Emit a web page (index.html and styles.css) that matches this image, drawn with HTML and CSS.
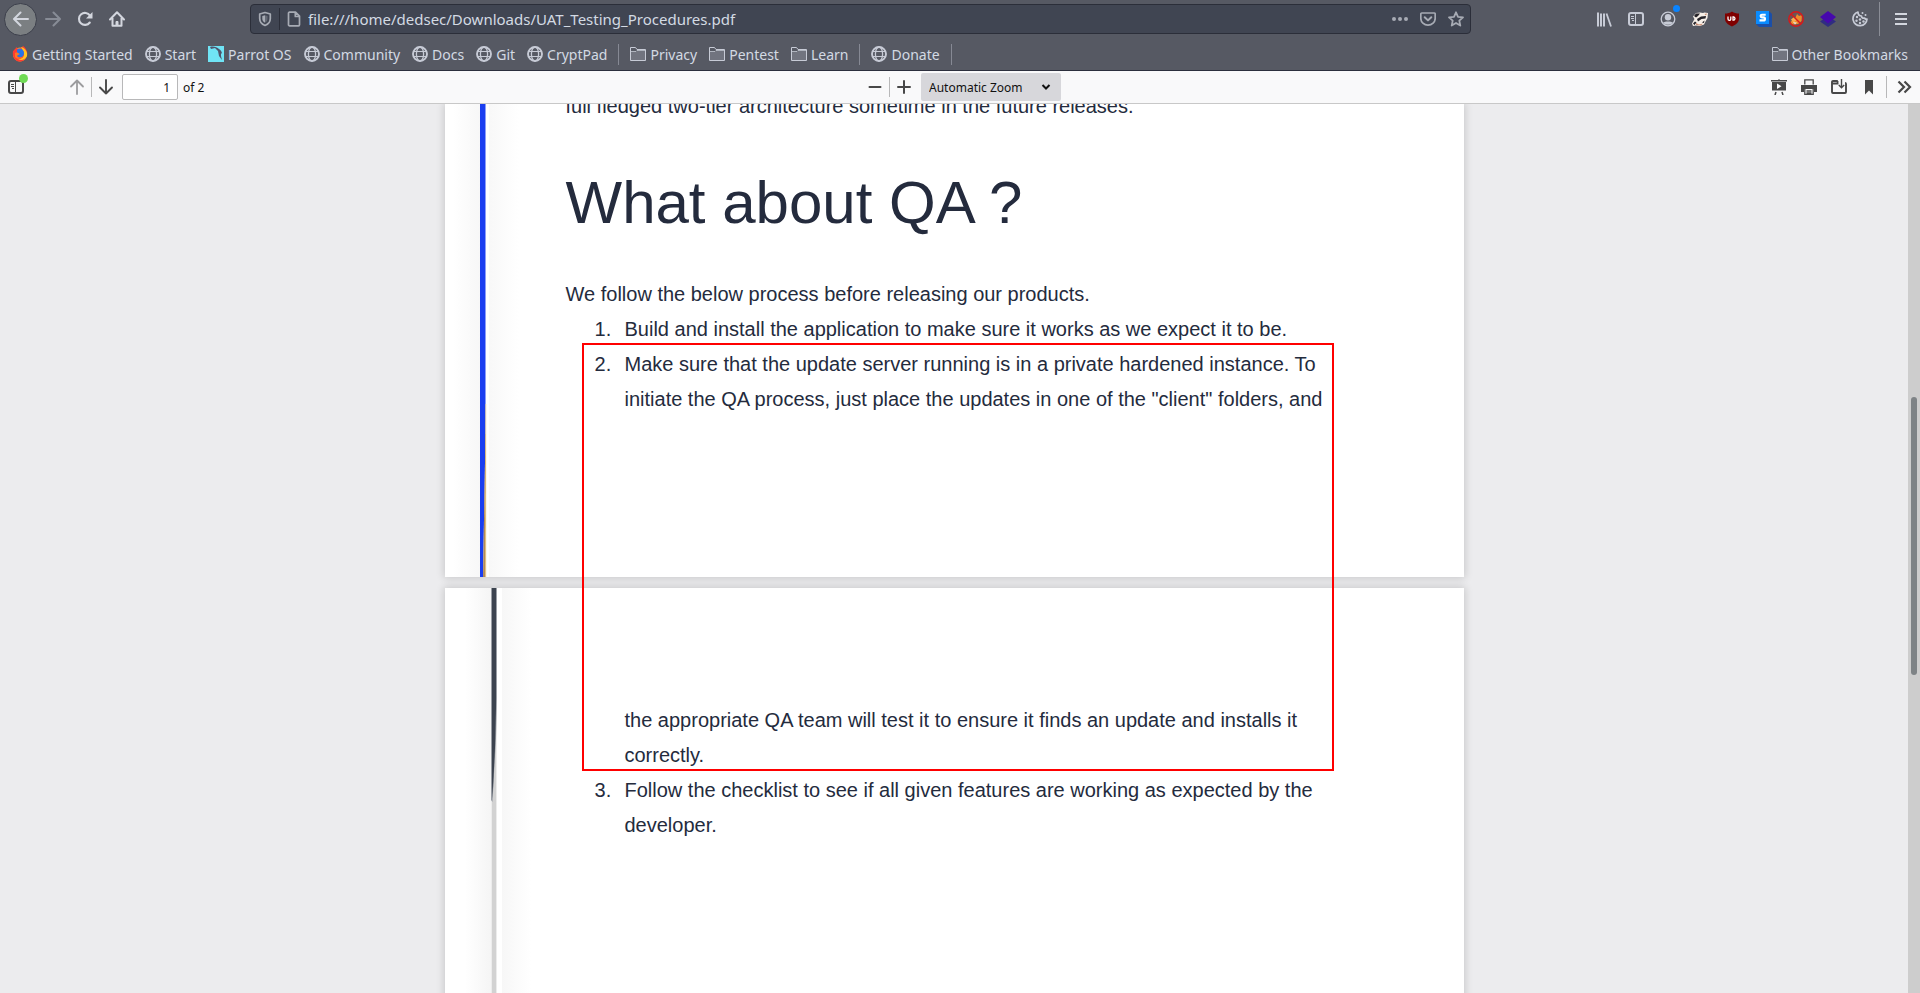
FILE: index.html
```html
<!DOCTYPE html>
<html lang="en">
<head>
<meta charset="utf-8">
<title>UAT_Testing_Procedures.pdf</title>
<link rel="stylesheet" href="styles.css">
</head>
<body>
<svg class="defs" aria-hidden="true">
  <symbol id="globe" viewBox="0 0 16 16"><g fill="none" stroke="#c7cbd6" stroke-width="1.3"><circle cx="8" cy="8" r="7" stroke-width="1.9"/><ellipse cx="8" cy="8" rx="3.6" ry="7"/><path d="M2 5.500h12M2 10.500h12" stroke-width="1.200"/></g></symbol>
  <symbol id="folder" viewBox="0 0 16 16"><path d="M.5 14.500v-13h5l1.500 2h8.500v11z" fill="#565963" stroke="#c7cbd6"/><path d="M1 6h5l1-1h8v9H1z" fill="#71747f"/><path d="M1 5.500h5l1-1h8" fill="none" stroke="#c7cbd6" stroke-width=".8"/></symbol>
  <symbol id="sidebar" viewBox="0 0 16 16"><rect x="1" y="2" width="14" height="12" rx="2" fill="none" stroke="currentColor" stroke-width="2"/><path d="M7.500 2v12" stroke="currentColor"/><path d="M3 5.500h3M3 7.500h3M4 9.500h2" stroke="currentColor"/></symbol>
</svg>

<header class="chrome">
  <div class="nav">
    <div class="nav-buttons">
      <button class="icon-btn back" aria-label="Back"><svg viewBox="0 0 16 16"><path d="M15 8H1.500M7.500 1.500L1 8l6.500 6.500" fill="none" stroke="#d3d6de" stroke-width="2" stroke-linecap="round" stroke-linejoin="round"/></svg></button>
      <button class="icon-btn" aria-label="Forward"><svg viewBox="0 0 16 16"><path d="M1 8h13.500M8.500 1.500L15 8l-6.500 6.500" fill="none" stroke="#888c96" stroke-width="2" stroke-linecap="round" stroke-linejoin="round"/></svg></button>
      <button class="icon-btn" aria-label="Reload"><svg viewBox="0 0 16 16"><path d="M12.800 11.500A6 6 0 1 1 13 4.600" fill="none" stroke="#d3d6de" stroke-width="2.100" stroke-linecap="round"/><path d="M15.500 1v6.500H9z" fill="#d3d6de"/></svg></button>
      <button class="icon-btn" aria-label="Home"><svg viewBox="0 0 16 16"><path d="M1 8.500L8 1.300l7 7.200M3.500 7v7.700h9V7" fill="none" stroke="#d3d6de" stroke-width="2" stroke-linecap="round" stroke-linejoin="round"/><path d="M7 14.500v-4h2v4z" fill="#d3d6de" stroke="#d3d6de"/></svg></button>
    </div>
    <div class="urlbar">
      <button class="url-icon shield" aria-label="Tracking protection"><svg viewBox="0 0 16 16"><path d="M8 1.500L13.300 3v4.500C13.300 11 11 13.300 8 14.500 5 13.300 2.700 11 2.700 7.500V3z" fill="none" stroke="#a7abb4" stroke-width="1.700" stroke-linejoin="round"/><path d="M8 4.300L5.300 5v3c0 1.500 1.200 3 2.700 3.800z" fill="#a7abb4"/><path d="M8 4.300l2.500.7v3C10.500 9.500 9.500 11 8 11.800z" fill="#666b76"/></svg></button>
      <button class="url-icon" aria-label="Page information"><svg viewBox="0 0 16 16"><path d="M3.500 1.200h6l4 4v8.600a1 1 0 0 1-1 1h-9a1 1 0 0 1-1-1V2.200a1 1 0 0 1 1-1zM9.300 1.500v4h4" fill="none" stroke="#a7abb4" stroke-width="1.700" stroke-linejoin="round"/></svg></button>
      <input class="url-input" aria-label="Address" value="file:///home/dedsec/Downloads/UAT_Testing_Procedures.pdf">
      <div class="url-actions">
        <button class="url-icon" aria-label="Page actions"><svg viewBox="0 0 16 16"><g fill="#a7abb4"><circle cx="2" cy="8" r="2"/><circle cx="8" cy="8" r="2"/><circle cx="14" cy="8" r="2"/></g></svg></button>
        <button class="url-icon" aria-label="Save to Pocket"><svg viewBox="0 0 16 16"><path d="M1.800 2h12.400a1 1 0 0 1 1 1v4.300a7.100 6.700 0 0 1-14.400 0V3a1 1 0 0 1 1-1z" fill="none" stroke="#a7abb4" stroke-width="1.700"/><path d="M4.700 6.200L8 9.400l3.300-3.200" fill="none" stroke="#a7abb4" stroke-width="2" stroke-linecap="round" stroke-linejoin="round"/></svg></button>
        <button class="url-icon" aria-label="Bookmark this page"><svg viewBox="0 0 16 16"><path d="M8 1.300l2 4.500 5 .5-3.700 3.300 1 5L8 12l-4.300 2.600 1-5L1 6.300l5-.5z" fill="none" stroke="#a7abb4" stroke-width="1.800" stroke-linejoin="round"/></svg></button>
      </div>
    </div>
    <div class="extensions">
      <button class="icon-btn" aria-label="Library"><svg viewBox="0 0 16 16"><path d="M2 1.500v14M5 2.500v13M8 2.500v13" stroke="#c7cbd6" stroke-width="2"/><path d="M10.500 2.500l4.500 13" stroke="#c7cbd6" stroke-width="1.800"/></svg></button>
      <button class="icon-btn light" aria-label="Sidebars"><svg viewBox="0 0 16 16"><use href="#sidebar"/></svg></button>
      <button class="icon-btn account" aria-label="Account"><svg viewBox="0 0 16 16"><circle cx="8" cy="8" r="6.800" fill="none" stroke="#c7cbd6" stroke-width="1.300"/><circle cx="8" cy="6.300" r="3.200" fill="#c7cbd6"/><path d="M3 11.500c2-1.500 8-1.500 10 0-2 3-8 3-10 0z" fill="#c7cbd6"/></svg><span class="account-dot"></span></button>
      <button class="icon-btn" aria-label="Privacy Badger"><svg viewBox="0 0 16 16"><path d="M0 12.500L2.500 8 1 5.500 4 2l4-.5 3 .5 1.500-.5L16 2l-.5 5-2 3.500-1.500 3L8 15l-4-.5-3 .5z" fill="#f6efe8"/><path d="M2 5l2-2.500h4L6 5 4 6.500zM5 8l4-2.500 5-.5-.5 2.500-4 .5L6 10.500zM1 12.500l2-2 1.500 1L2.500 14zM10 11.500l2.500-2-.5 2.500z" fill="#252329"/><path d="M12.500 3l2.500-.500-1 2zM4 12l3 1.500 4-1-2 2-5-.500z" fill="#c98c72"/></svg></button>
      <button class="icon-btn" aria-label="uBlock Origin"><svg viewBox="0 0 16 16"><path d="M8 .5c2 1.500 4.500 2 7 2v5c0 4-3 6-7 8-4-2-7-4-7-8v-5c2.500 0 5-.5 7-2z" fill="#800000"/><path d="M4 5.500v2.500a1.200 1.200 0 0 0 2.800 0V5.500M9 6h1a1.800 1.800 0 0 1 0 3.200H9z" fill="none" stroke="#fff" stroke-width="1.300"/></svg></button>
      <button class="icon-btn" aria-label="Stylus"><svg viewBox="0 0 16 16"><path d="M13 0l3 3v13H3l-3-3z" fill="#1b4fa8"/><path d="M0 0h13v13H0z" fill="#0a8cff"/><path d="M9.700 3.700H6a1.300 1.300 0 0 0 0 2.700h1.500a1.500 1.500 0 0 1 0 3H3.500" fill="none" stroke="#fff" stroke-width="2.100"/></svg></button>
      <button class="icon-btn" aria-label="FoxyProxy"><svg viewBox="0 0 16 16"><circle cx="8" cy="8" r="7.200" fill="#6b5557"/><path d="M7.500 6.500l1.500-3.500 2 2 3-1-.5 6-3.500 3-6 .5-1.500-2.500z" fill="#f08a2a"/><path d="M3 8.500l3-2.500 3 2.500L5.500 12z" fill="#f9b04f"/><path d="M5 11l4 .5-2 2z" fill="#e6dfd5"/><circle cx="8" cy="8" r="7.200" fill="none" stroke="#d91819" stroke-width="1.400"/><path d="M3 3l10 10" stroke="#d91819" stroke-width="1.400"/></svg></button>
      <button class="icon-btn" aria-label="Wappalyzer"><svg viewBox="0 0 16 16"><path d="M8 5l8 5.500L8 16 0 10.500z" fill="#302d82"/><path d="M8 0l8 6-8 6.500L0 6z" fill="#4608ad"/></svg></button>
      <button class="icon-btn" aria-label="Cookie manager"><svg viewBox="0 0 16 16"><path d="M6 1a7 7 0 1 0 9 7c-1 .5-2 0-2.500-1-2 .5-3-.5-3-2C7 5 6 3 6 1z" fill="none" stroke="#c7cbd6" stroke-width="1.700" stroke-linejoin="round"/><g fill="#c7cbd6"><circle cx="5" cy="6" r="1.200"/><circle cx="4.500" cy="9.700" r="1.200"/><circle cx="8" cy="8.500" r="1.200"/><circle cx="8" cy="12" r="1.200"/><circle cx="11.500" cy="10.500" r="1.200"/><circle cx="10.500" cy="2" r="1"/><circle cx="13.500" cy="4" r="1"/></g></svg></button>
      <span class="menu-sep"></span>
      <button class="icon-btn menu" aria-label="Open menu"><svg viewBox="0 0 16 16"><path d="M2 3h12M2 8h12M2 13h12" stroke="#d3d6de" stroke-width="2"/></svg></button>
    </div>
  </div>

  <nav class="bookmarks" aria-label="Bookmarks">
    <a href="#"><svg viewBox="0 0 16 16"><circle cx="8" cy="8.500" r="7" fill="#ff9a16"/><path d="M1 5c2-1 3-3 3-4l3 3 4-4c3 2 5 6 4 9-1 4-4 7-8 6.500C3 15 0 11 1 5z" fill="#ff3c32"/><path d="M9 1c4 1 7 5 6 9-2 4-6 5-9 3 4 0 6-2 6-5 0-3-2-4-3-7z" fill="#ffc421"/><path d="M5 4c2-3 7-1 7 3s-4 6-7 3z" fill="#2675e9"/><path d="M3 7c2-1 3 0 5 1-1 1-3 1-3 2 1 2 4 2 6 0-1 3-6 4-8 1z" fill="#ff7625"/></svg>Getting Started</a>
    <a href="#"><svg><use href="#globe"/></svg>Start</a>
    <a href="#"><svg viewBox="0 0 16 16"><path d="M0 0h16v16H0z" fill="#70e4f5"/><path d="M2 1c3-1 7 0 9 2 2 1 3 3 3 5l-1-1v3l1 4-3-4-1-5-3-3-4 1z" fill="#50546c"/></svg>Parrot OS</a>
    <a href="#"><svg><use href="#globe"/></svg>Community</a>
    <a href="#"><svg><use href="#globe"/></svg>Docs</a>
    <a href="#"><svg><use href="#globe"/></svg>Git</a>
    <a href="#"><svg><use href="#globe"/></svg>CryptPad</a>
    <span class="sep"></span>
    <a href="#"><svg><use href="#folder"/></svg>Privacy</a>
    <a href="#"><svg><use href="#folder"/></svg>Pentest</a>
    <a href="#"><svg><use href="#folder"/></svg>Learn</a>
    <span class="sep"></span>
    <a href="#"><svg><use href="#globe"/></svg>Donate</a>
    <span class="sep"></span>
    <a href="#" class="other"><svg><use href="#folder"/></svg>Other Bookmarks</a>
  </nav>
</header>

<div class="toolbar">
  <div class="tools tools-left">
    <button class="tool toggle" aria-label="Toggle sidebar"><svg viewBox="0 0 16 16"><use href="#sidebar"/></svg><span class="toggle-dot"></span></button>
    <div class="pager">
      <button class="tool dim" aria-label="Previous page"><svg viewBox="0 0 16 16"><path d="M8 15V1.500M2 7.500l6-6 6 6" fill="none" stroke="currentColor" stroke-width="1.800" stroke-linecap="round" stroke-linejoin="round"/></svg></button>
      <span class="tool-sep"></span>
      <button class="tool" aria-label="Next page"><svg viewBox="0 0 16 16"><path d="M8 1v13.500M2 8.500l6 6 6-6" fill="none" stroke="currentColor" stroke-width="1.900" stroke-linecap="round" stroke-linejoin="round"/></svg></button>
      <input class="page-input" id="page" value="1">
      <label class="page-label" for="page">of 2</label>
    </div>
  </div>
  <div class="tools tools-zoom">
    <button class="tool" aria-label="Zoom out"><svg viewBox="0 0 16 16"><path d="M2.500 8h11" stroke="currentColor" stroke-width="2" stroke-linecap="round"/></svg></button>
    <span class="tool-sep"></span>
    <button class="tool" aria-label="Zoom in"><svg viewBox="0 0 16 16"><path d="M2 8h12M8 2v12" stroke="currentColor" stroke-width="2" stroke-linecap="round"/></svg></button>
    <div class="zoom"><select aria-label="Zoom"><option>Automatic Zoom</option></select><svg viewBox="0 0 10 10"><path d="M1.500 3L5 6.500 8.500 3" fill="none" stroke="#111" stroke-width="2"/></svg></div>
  </div>
  <div class="tools tools-right">
    <button class="tool" aria-label="Presentation mode"><svg viewBox="0 0 16 16"><path d="M0 1h16v1.500H0zM7.500 0h1v1h-1zM1 3h14v8.500H1z" fill="currentColor"/><path d="M6 4.500v5.500l4.500-2.700z" fill="#f9f9fa"/><path d="M5 13l-1 3M11 13l1 3" stroke="currentColor" stroke-width="1.500"/></svg></button>
    <button class="tool" aria-label="Print"><svg viewBox="0 0 16 16"><path d="M0 6h16v7h-3v-3H3v3H0z" fill="currentColor"/><path d="M3.800 5.500V.8h8.400v4.700M3.800 9.800v5.500h8.400V9.800M5.500 12h5M5.500 14h5" fill="none" stroke="currentColor" stroke-width="1.300"/></svg></button>
    <button class="tool" aria-label="Download"><svg viewBox="0 0 16 16"><path d="M7 3.500L6 2H2a1 1 0 0 0-1 1v10a1 1 0 0 0 1 1h12a1 1 0 0 0 1-1V5a1 1 0 0 0-1-1M1 4.500h6.500" fill="none" stroke="currentColor" stroke-width="1.900"/><path d="M10.500 0v8.500M7.800 6l2.700 2.800L13.200 6" fill="none" stroke="currentColor" stroke-width="1.400"/></svg></button>
    <button class="tool" aria-label="Current view"><svg viewBox="0 0 16 16"><path d="M4 1h8v14.500L8 11.500l-4 4z" fill="currentColor"/></svg></button>
    <span class="tool-sep tall"></span>
    <button class="tool" aria-label="Tools"><svg viewBox="0 0 16 16"><path d="M2.500 2.500L8 8l-5.500 5.500M8.500 2.500L14 8l-5.500 5.500" fill="none" stroke="currentColor" stroke-width="2.200"/></svg></button>
  </div>
</div>

<main class="viewer">
  <div class="canvas">
    <section class="page page-one">
      <div class="art"><svg viewBox="0 0 7 473" preserveAspectRatio="none"><path d="M0 0h5.500v330L3 473H0z" fill="#1a3ef0"/><path d="M5.500 330L3 473h3V330z" fill="#b08a5a"/><path d="M5.500 300h.7v173h-1z" fill="#f0cf8a"/></svg></div>
      <div class="copy">
        <p>full fledged two-tier architecture sometime in the future releases.</p>
        <h1>What about QA ?</h1>
        <p>We follow the below process before releasing our products.</p>
        <ol>
          <li>Build and install the application to make sure it works as we expect it to be.</li>
          <li>Make sure that the update server running is in a private hardened instance. To<br>initiate the QA process, just place the updates in one of the "client" folders, and</li>
        </ol>
      </div>
    </section>
    <section class="page page-two">
      <div class="art"><svg viewBox="0 0 7 214" preserveAspectRatio="none"><path d="M0 0h6v110L5 150 2.500 195l-1 19L0 212z" fill="#9a9ea5"/><path d="M1 0h4v120l-1 40-2.500 50L1 195z" fill="#3c434f"/></svg></div>
      <div class="copy">
        <p class="continued">the appropriate QA team will test it to ensure it finds an update and installs it<br>correctly.</p>
        <ol class="from-three">
          <li>Follow the checklist to see if all given features are working as expected by the<br>developer.</li>
        </ol>
      </div>
    </section>
    <div class="highlight"></div>
  </div>
  <div class="scrollbar"><div class="thumb"></div></div>
</main>
</body>
</html>
```

FILE: styles.css
```css
* { box-sizing: border-box; }
body {
  margin: 0;
  height: 100vh;
  display: flex;
  flex-direction: column;
  overflow: hidden;
  font-family: "Noto Sans", sans-serif;
}
button, input, select { font: inherit; margin: 0; padding: 0; border: 0; background: none; color: inherit; }
.defs { display: none; }

/* Browser chrome */
.chrome { background: #565963; border-bottom: 1px solid #2c2f3d; color: #d3dae3; flex: none; }
.nav { display: flex; align-items: center; height: 38px; padding: 0 3px 0 4px; }
.nav-buttons { display: flex; align-items: center; flex: 0 0 246px; }
.icon-btn { position: relative; display: flex; align-items: center; justify-content: center; width: 32px; height: 32px; }
.icon-btn svg { width: 16px; height: 16px; }
.icon-btn.light { color: #c7cbd6; }
.back { width: 33px; height: 33px; border-radius: 50%; background: #7b7f82; border: 1px solid #3c3f4b; }
.urlbar {
  display: flex;
  align-items: center;
  flex: 1;
  height: 30px;
  background: #404552;
  border: 1px solid #2b2e39;
  border-radius: 4px;
}
.url-icon { display: flex; align-items: center; justify-content: center; width: 28px; height: 22px; flex: none; }
.url-icon svg { width: 16px; height: 16px; }
.shield { border-right: 1px solid #2b2e39; width: 29px; }
.url-input { flex: 1; font-size: 15px; outline: none; }
.url-actions { display: flex; }
.extensions { display: flex; align-items: center; padding-left: 117px; }
.account-dot { position: absolute; right: 4px; top: 2px; width: 7px; height: 7px; border-radius: 50%; background: #0a84ff; }
.menu-sep { width: 1px; height: 34px; background: #8a8d96; margin: 0 5px 0 3px; }

.bookmarks { display: flex; align-items: center; gap: 12px; height: 32px; padding: 0 12px; font-size: 14px; white-space: nowrap; }
.bookmarks a { display: flex; align-items: center; gap: 4px; color: inherit; text-decoration: none; }
.bookmarks svg { width: 16px; height: 16px; flex: none; }
.sep { width: 1px; height: 21px; background: #868994; margin: 0 -1px; }
.bookmarks .other { margin-left: auto; }

/* PDF toolbar */
.toolbar { display: flex; align-items: center; justify-content: space-between; height: 33px; flex: none; background: #f9f9fa; border-bottom: 1px solid #c8c8c8; color: #484848; font-size: 12px; }
.tools { display: flex; align-items: center; }
.tools-left { flex: 1; padding-left: 2px; }
.tools-zoom { padding-left: 1px; }
.tools-right { flex: 1; justify-content: flex-end; padding-right: 1px; }
.tool { position: relative; display: flex; align-items: center; justify-content: center; width: 28px; height: 28px; }
.tools-right .tool { width: 30px; }
.tool svg { width: 16px; height: 16px; }
.dim { color: #9c9c9e; }
.toggle-dot { position: absolute; right: 2px; top: 1px; width: 9px; height: 9px; border-radius: 50%; background: #70db55; }
.pager { display: flex; align-items: center; padding-left: 33px; }
.tool-sep { width: 1px; height: 20px; background: #b8b8b9; }
.tall { height: 22px; margin: 0 2px; }
.page-input { width: 56px; height: 26px; margin-left: 2px; padding-right: 7px; text-align: right; border: 1px solid #b8b8b9; border-radius: 2px; background: #fff; color: #111; }
.page-label { padding-left: 5px; color: #111; }
.zoom { position: relative; display: flex; align-items: center; margin-left: 3px; }
.zoom select { appearance: none; width: 140px; height: 28px; padding-left: 8px; background: #d7d7db; border-radius: 2px; color: #111; }
.zoom svg { position: absolute; right: 10px; width: 10px; height: 10px; pointer-events: none; }

/* Document */
.viewer { display: flex; flex: 1; min-height: 0; background: #ececee; overflow: hidden; }
.canvas { position: relative; flex: 1; display: flex; flex-direction: column; align-items: center; gap: 11px; }
.page {
  display: flex;
  width: 1019px;
  flex: none;
  background: #fff;
  box-shadow: 0 0 8px 1px rgba(0, 0, 0, 0.16);
  color: #242b3d;
  font-family: "Liberation Sans", Arial, sans-serif;
  font-size: 20px;
  line-height: 35px;
}
.art { flex: 0 0 121px; align-self: stretch; }
.art svg { display: block; width: 7px; }
.copy { min-width: 0; white-space: nowrap; }
.page-one { height: 473px; }
.page-one .art { padding-left: 35px; background: linear-gradient(90deg, #fff 8px, #f7f7f7 35px, #fff 35px, #fff 44px, #f8f8f8 44px, #fff 74px); }
.page-one .art svg { height: 473px; }
.page-one .copy { margin-top: -15px; }
.page-two { height: 500px; }
.page-two .art { padding-left: 46px; background: linear-gradient(90deg, #fff 20px, #f5f5f5 46px, #ececec 46px, #ececec 47px, #d2d2d2 47px, #d2d2d2 51px, #ececec 51px, #ececec 52px, #fff 52px, #fff 57px, #f7f7f7 57px, #fff 86px); }
.page-two .art svg { height: 214px; }
.page-two .copy { padding-top: 115px; }
.copy p { margin: 0; }
.copy h1 { margin: 44px 0 39px; font-size: 60px; line-height: 70px; font-weight: 400; }
.copy ol { margin: 0; padding: 0; list-style: none; counter-reset: step; }
.copy .from-three { counter-reset: step 2; }
.copy li { display: flex; padding-left: 29px; counter-increment: step; }
.copy li::before { content: counter(step) "."; flex: 0 0 30px; }
.copy .continued { padding-left: 59px; }
.highlight { position: absolute; top: 239px; left: 50%; width: 752px; height: 428px; margin-left: -372px; border: 2px solid #f00; }
.scrollbar { width: 12px; background: #cdcdcd; padding: 293px 3px 0; }
.thumb { height: 278px; border-radius: 3px; background: #7e8386; }
```
